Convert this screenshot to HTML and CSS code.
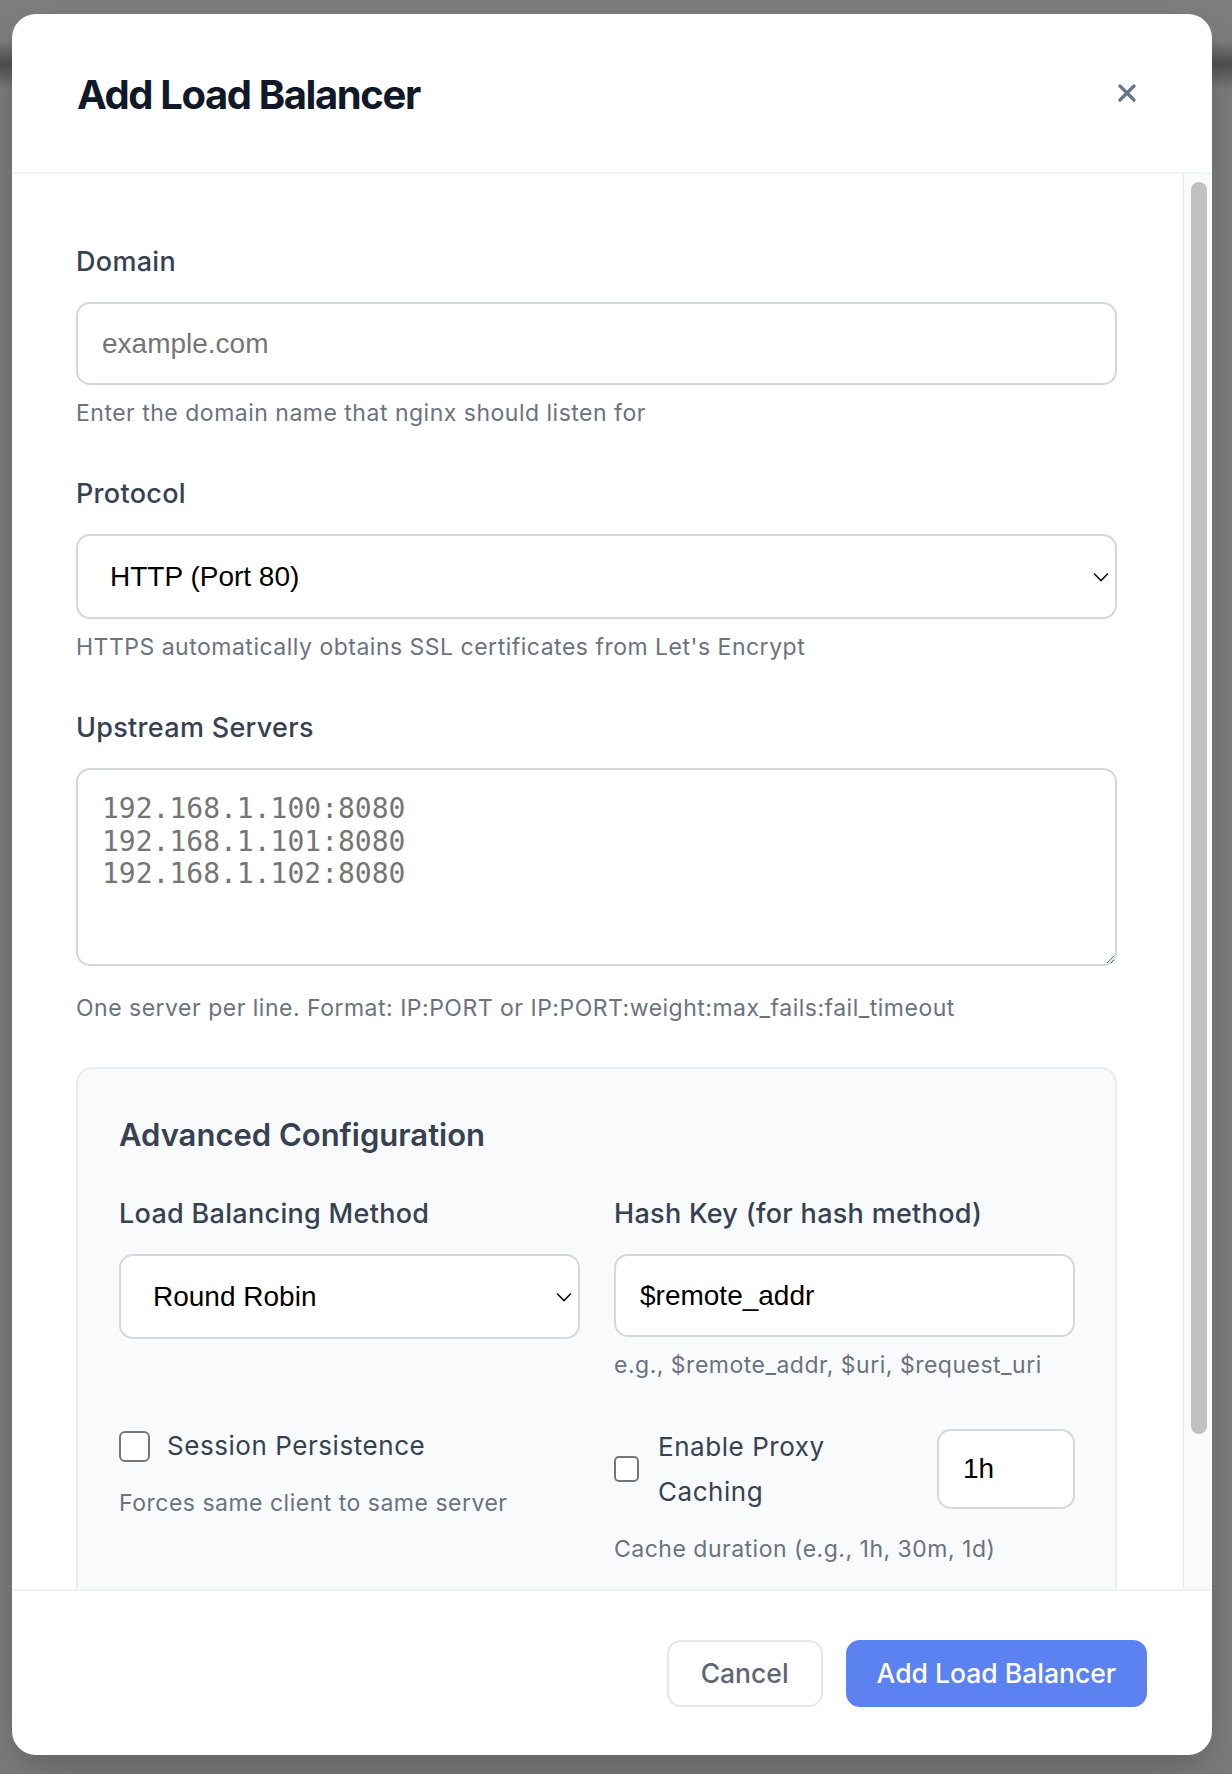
FILE: index.html
```html
<!DOCTYPE html>
<html lang="en">
<head>
<meta charset="utf-8">
<title>Add Load Balancer</title>
<link rel="stylesheet" href="styles.css">
</head>
<body>
<div class="overlay">
  <div class="modal">
    <header class="modal-header">
      <h2 class="modal-title">Add Load Balancer</h2>
      <button class="close-btn" type="button" aria-label="Close">
        <svg width="18" height="18" viewBox="0 0 18 18"><path d="M2 2 L16 16 M16 2 L2 16" stroke="#64748b" stroke-width="3.2" stroke-linecap="round" fill="none"/></svg>
      </button>
    </header>
    <div class="modal-body-wrap">
      <div class="modal-body">
        <div class="field">
          <label class="field-label">Domain</label>
          <input class="text-input" type="text" placeholder="example.com">
          <p class="help">Enter the domain name that nginx should listen for</p>
        </div>
        <div class="field">
          <label class="field-label">Protocol</label>
          <div class="select-wrap">
            <select class="select-input">
              <option>HTTP (Port 80)</option>
              <option>HTTPS (Port 443)</option>
            </select>
            <svg class="chevron" width="16" height="10" viewBox="0 0 16 10"><path d="M1 1.5 L8 8.5 L15 1.5" stroke="#111" stroke-width="1.6" fill="none"/></svg>
          </div>
          <p class="help">HTTPS automatically obtains SSL certificates from Let's Encrypt</p>
        </div>
        <div class="field field-last">
          <label class="field-label">Upstream Servers</label>
          <textarea class="textarea-input" placeholder="192.168.1.100:8080&#10;192.168.1.101:8080&#10;192.168.1.102:8080"></textarea>
          <p class="help help-after-textarea">One server per line. Format: IP:PORT or IP:PORT:weight:max_fails:fail_timeout</p>
        </div>
        <section class="advanced">
          <h3 class="advanced-title">Advanced Configuration</h3>
          <div class="adv-grid">
            <div class="adv-cell">
              <label class="field-label">Load Balancing Method</label>
              <div class="select-wrap">
                <select class="select-input">
                  <option>Round Robin</option>
                  <option>Least Connections</option>
                  <option>IP Hash</option>
                  <option>Hash</option>
                </select>
                <svg class="chevron" width="16" height="10" viewBox="0 0 16 10"><path d="M1 1.5 L8 8.5 L15 1.5" stroke="#111" stroke-width="1.6" fill="none"/></svg>
              </div>
            </div>
            <div class="adv-cell">
              <label class="field-label">Hash Key (for hash method)</label>
              <input class="text-input hash-input" type="text" value="$remote_addr">
              <p class="help">e.g., $remote_addr, $uri, $request_uri</p>
            </div>
            <div class="adv-cell">
              <label class="check-row">
                <input class="checkbox" type="checkbox">
                <span class="check-label">Session Persistence</span>
              </label>
              <p class="help help-check">Forces same client to same server</p>
            </div>
            <div class="adv-cell">
              <div class="proxy-row">
                <input class="checkbox checkbox-small" type="checkbox" id="proxy">
                <label class="proxy-label" for="proxy">Enable Proxy Caching</label>
                <input class="text-input duration-input" type="text" value="1h">
              </div>
              <p class="help help-check">Cache duration (e.g., 1h, 30m, 1d)</p>
            </div>
          </div>
        </section>
      </div>
      <div class="scrollbar" aria-hidden="true">
        <div class="scrollbar-thumb"></div>
      </div>
    </div>
    <footer class="modal-footer">
      <button class="btn btn-secondary" type="button">Cancel</button>
      <button class="btn btn-primary" type="button">Add Load Balancer</button>
    </footer>
  </div>
</div>
</body>
</html>
```

FILE: styles.css
```css
* {
  box-sizing: border-box;
}

html,
body {
  margin: 0;
  padding: 0;
}

body {
  font-family: Inter, "Noto Sans", "Liberation Sans", sans-serif;
  background: linear-gradient(180deg, #7d7d7d 0px, #7d7d7d 40px, #4e4e4e 64px, #7b7b7b 90px, #7b7b7b 100%);
  height: 1774px;
  overflow: hidden;
}

.overlay {
  height: 1774px;
  padding: 14px 20px 0 12px;
}

.modal {
  width: 1200px;
  height: 1741px;
  background: #ffffff;
  border-radius: 24px;
  display: flex;
  flex-direction: column;
  overflow: hidden;
  box-shadow: 0 20px 40px -8px rgba(0, 0, 0, 0.22);
}

.modal-header {
  flex: 0 0 160px;
  display: flex;
  align-items: center;
  justify-content: space-between;
  padding: 3px 65px 0;
  border-bottom: 2px solid #f0f3f7;
}

.modal-title {
  margin: 0;
  font-size: 40px;
  line-height: 48px;
  font-weight: 700;
  color: #111827;
  letter-spacing: -1.4px;
}

.close-btn {
  width: 40px;
  height: 40px;
  margin-top: -3px;
  border: 0;
  background: transparent;
  padding: 0;
  display: flex;
  align-items: center;
  justify-content: center;
  cursor: pointer;
}

.modal-body-wrap {
  flex: 1 1 auto;
  min-height: 0;
  display: flex;
}

.modal-body {
  flex: 1 1 auto;
  min-width: 0;
  overflow: hidden;
  padding: 68px 66px 0 64px;
}

.scrollbar {
  flex: 0 0 29px;
  background: #fafafa;
  border-left: 1px solid #e6e6e6;
  padding: 8px 5px 0 7px;
}

.scrollbar-thumb {
  height: 1252px;
  background: #c1c1c1;
  border-radius: 8px;
}

.field {
  margin-bottom: 44px;
}

.field-last {
  margin-bottom: 42px;
}

.field-label {
  display: block;
  font-size: 27px;
  line-height: 39px;
  font-weight: 500;
  letter-spacing: 0.3px;
  color: #374151;
  margin-bottom: 21px;
}

.text-input {
  display: block;
  width: 100%;
  height: 83px;
  border: 2px solid #d4d8de;
  border-radius: 14px;
  padding: 0 24px;
  font-family: "Liberation Sans", Arial, sans-serif;
  font-size: 28px;
  color: #000000;
  background: #ffffff;
  outline: none;
}

.text-input::placeholder {
  color: #757575;
}

.select-wrap {
  position: relative;
}

.select-input {
  display: block;
  width: 100%;
  height: 85px;
  border: 2px solid #d4d8de;
  border-radius: 14px;
  padding: 0 40px 0 32px;
  font-family: "Liberation Sans", Arial, sans-serif;
  font-size: 28px;
  color: #000000;
  background: #ffffff;
  -webkit-appearance: none;
  appearance: none;
  outline: none;
}

.chevron {
  position: absolute;
  right: 8px;
  top: 50%;
  margin-top: -5px;
  pointer-events: none;
}

.textarea-input {
  display: block;
  width: 100%;
  height: 198px;
  border: 2px solid #d4d8de;
  border-radius: 14px;
  padding: 23px 24px;
  font-family: "DejaVu Sans Mono", "Liberation Mono", monospace;
  font-size: 28px;
  line-height: 32.5px;
  color: #000000;
  background: #ffffff;
  resize: vertical;
  outline: none;
}

.textarea-input::placeholder {
  color: #757575;
}

.help {
  margin: 11px 0 0;
  font-size: 23px;
  line-height: 34px;
  letter-spacing: 0.5px;
  color: #6b7280;
}

.help-after-textarea {
  margin-top: 25px;
}

.advanced {
  border: 2px solid #e8ebf0;
  background: #f8fafc;
  border-radius: 16px;
  padding: 42px 40px 42px 41px;
}

.advanced-title {
  margin: 0 0 35px;
  font-size: 31px;
  line-height: 48px;
  font-weight: 600;
  color: #374151;
}

.adv-grid {
  display: grid;
  grid-template-columns: 1fr 1fr;
  column-gap: 34px;
  row-gap: 47px;
}

.adv-cell {
  min-width: 0;
}

.check-row {
  display: flex;
  align-items: center;
  height: 34px;
}

.checkbox {
  -webkit-appearance: none;
  appearance: none;
  margin: 0;
  width: 31px;
  height: 31px;
  flex: 0 0 auto;
  border: 2px solid #767676;
  border-radius: 6px;
  background: #ffffff;
}

.checkbox-small {
  width: 25px;
  height: 26px;
  border-radius: 5px;
}

.check-label {
  margin-left: 17px;
  font-size: 26px;
  line-height: 34px;
  font-weight: 400;
  letter-spacing: 0.55px;
  color: #374151;
}

.help-check {
  margin-top: 23px;
}

.proxy-row {
  display: flex;
  align-items: center;
  height: 80px;
}

.proxy-label {
  flex: 1 1 auto;
  margin: 0 20px 0 19px;
  font-size: 26px;
  line-height: 45px;
  letter-spacing: 0.55px;
  color: #374151;
}

.duration-input {
  width: 138px;
  height: 80px;
  flex: 0 0 auto;
}

.modal-footer {
  flex: 0 0 166px;
  border-top: 2px solid #eef2f6;
  display: flex;
  align-items: center;
  justify-content: flex-end;
  gap: 23px;
  padding: 0 65px 0 0;
}

.btn {
  height: 67px;
  border-radius: 14px;
  font-family: Inter, "Noto Sans", sans-serif;
  font-size: 26.5px;
  font-weight: 500;
  padding: 0 29px;
  cursor: pointer;
}

.btn-secondary {
  background: #ffffff;
  border: 2px solid #e5e7eb;
  color: #5f6676;
  padding: 0 32px;
}

.btn-primary {
  background: #5b82f0;
  border: 2px solid #5b82f0;
  color: #ffffff;
}
```
